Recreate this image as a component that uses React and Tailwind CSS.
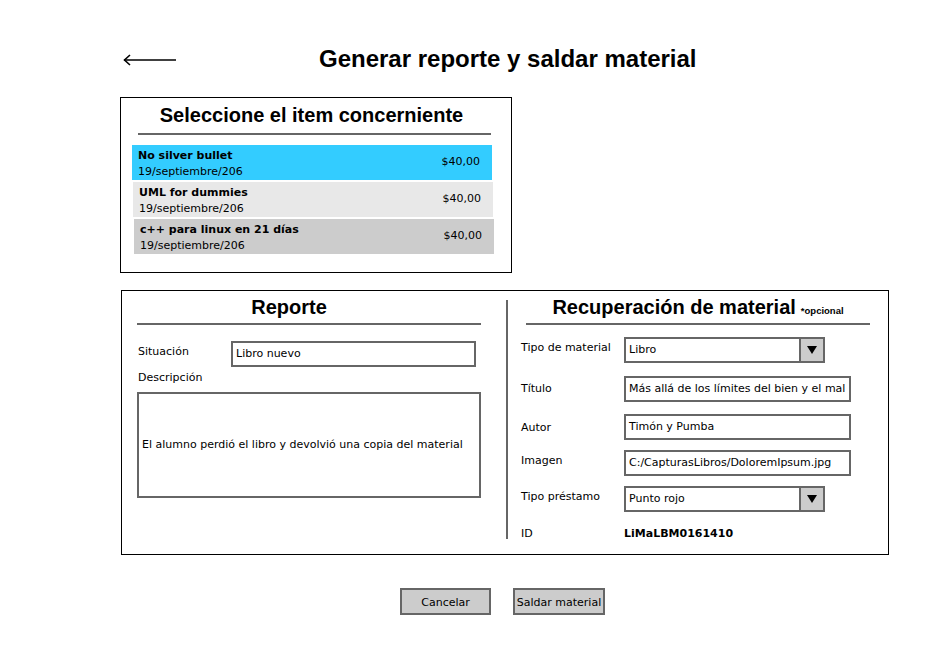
import React from "react";

const comic = { fontFamily: '"DejaVu Sans", sans-serif' };
const arial = { fontFamily: '"Liberation Sans", Arial, sans-serif' };

function Row({ name, date, bg, ml, mt }) {
  return (
    <div className={`flex items-center justify-between w-[360px] h-[35px] ${bg} ${ml} ${mt}`}>
      <div className="self-start pt-[3px] pl-[6px] leading-[16px] text-[11px] text-black">
        <div className="font-bold">{name}</div>
        <div>{date}</div>
      </div>
      <div className="pr-[12px] text-[11px] text-black">$40,00</div>
    </div>
  );
}

function Select({ value }) {
  return (
    <div className="flex w-[201px] h-[26px] border-2 border-[#666] bg-white">
      <div className="flex-1 flex items-center pl-[3px] text-[11px]">{value}</div>
      <div className="w-[26px] bg-[#cccccc] flex items-center justify-center -my-[2px] -mr-[2px] border-2 border-[#666]">
        <svg width="10" height="8" viewBox="0 0 10 8"><path d="M0 0 L10 0 L5 8 Z" fill="#000" /></svg>
      </div>
    </div>
  );
}

function Input({ value }) {
  return (
    <div className="flex items-center w-[227px] h-[26px] border-2 border-[#666] bg-white pl-[3px] text-[11px] whitespace-nowrap overflow-hidden">
      {value}
    </div>
  );
}

export default function App() {
  return (
    <div className="w-[950px] h-[650px] bg-white text-black" style={comic}>
      <div className="flex items-center pt-[44px] h-[74px]">
        <div className="ml-[123px] w-[54px] flex items-center mt-[2px]">
          <svg width="54" height="12" viewBox="0 0 54 12">
            <path d="M1 6 H53" stroke="#000" strokeWidth="1.6" />
            <path d="M7 1 L1.5 6 L7 11" stroke="#000" strokeWidth="1.6" fill="none" />
          </svg>
        </div>
        <h1 className="ml-[142px] text-[24px] font-bold leading-[30px]" style={arial}>
          Generar reporte y saldar material
        </h1>
      </div>

      <div className="ml-[120px] mt-[23px] w-[392px] h-[176px] border border-black">
        <div className="pt-[4px] pr-[9px] text-center text-[20px] font-bold leading-[26px]" style={arial}>
          Seleccione el item concerniente
        </div>
        <div className="ml-[17px] mt-[5px] w-[353px] h-[2px] bg-[#666]" />
        <Row name="No silver bullet" date="19/septiembre/206" bg="bg-[#33ccff]" ml="ml-[11px]" mt="mt-[10px]" />
        <Row name="UML for dummies" date="19/septiembre/206" bg="bg-[#e8e8e8]" ml="ml-[12px]" mt="mt-[2px]" />
        <Row name="c++ para linux en 21 días" date="19/septiembre/206" bg="bg-[#cccccc]" ml="ml-[13px]" mt="mt-[2px]" />
      </div>

      <div className="ml-[121px] mt-[17px] w-[768px] h-[265px] border border-black flex">
        <div className="w-[384px] pl-[15px]">
          <div className="w-[344px] h-[26px] mt-[3px] pr-[40px] text-center text-[20px] font-bold leading-[26px]" style={arial}>
            Reporte
          </div>
          <div className="mt-[3px] w-[344px] h-[2px] bg-[#666]" />
          <div className="flex items-start mt-[16px]">
            <div className="w-[94px] pl-[1px] pt-[3px] text-[11px]">Situación</div>
            <div className="flex items-center w-[245px] h-[26px] border-2 border-[#666] pl-[3px] text-[11px]">Libro nuevo</div>
          </div>
          <div className="mt-[4px] pl-[1px] text-[11px] leading-[14px]">Descripción</div>
          <div className="mt-[7px] w-[344px] h-[106px] border-2 border-[#666] flex items-center pl-[3px] text-[11px]">
            El alumno perdió el libro y devolvió una copia del material
          </div>
        </div>
        <div className="mt-[9px] h-[239px] w-[2px] bg-[#666]" />
        <div className="pl-[13px] flex-1">
          <div className="ml-[5px] w-[344px] h-[26px] mt-[3px] flex items-baseline justify-center leading-[26px]" style={arial}>
            <span className="text-[20px] font-bold">Recuperación de material</span>
            <span className="ml-[5px] text-[9.5px] font-bold">*opcional</span>
          </div>
          <div className="ml-[5px] mt-[3px] w-[344px] h-[2px] bg-[#666]" />
          <div className="flex items-center mt-[12px]">
            <div className="w-[103px] -mt-[4px] text-[11px]">Tipo de material</div>
            <Select value="Libro" />
          </div>
          <div className="flex items-center mt-[13px]">
            <div className="w-[103px] text-[11px]">Título</div>
            <Input value="Más allá de los límites del bien y el mal" />
          </div>
          <div className="flex items-center mt-[12px]">
            <div className="w-[103px] pt-[2px] text-[11px]">Autor</div>
            <Input value="Timón y Pumba" />
          </div>
          <div className="flex items-center mt-[10px]">
            <div className="w-[103px] -mt-[4px] text-[11px]">Imagen</div>
            <Input value="C:/CapturasLibros/DoloremIpsum.jpg" />
          </div>
          <div className="flex items-center mt-[10px]">
            <div className="w-[103px] -mt-[3px] text-[11px]">Tipo préstamo</div>
            <Select value="Punto rojo" />
          </div>
          <div className="flex items-center mt-[14px]">
            <div className="w-[103px] text-[11px]">ID</div>
            <div className="text-[11px] font-bold">LiMaLBM0161410</div>
          </div>
        </div>
      </div>

      <div className="flex mt-[33px] ml-[400px] gap-[22px]">
        <div className="w-[91px] h-[27px] border-2 border-[#666] bg-[#cccccc] flex items-center justify-center pt-[3px] text-[11px]">Cancelar</div>
        <div className="w-[92px] h-[27px] border-2 border-[#666] bg-[#cccccc] flex items-center justify-center pt-[3px] text-[11px] whitespace-nowrap">Saldar material</div>
      </div>
    </div>
  );
}
